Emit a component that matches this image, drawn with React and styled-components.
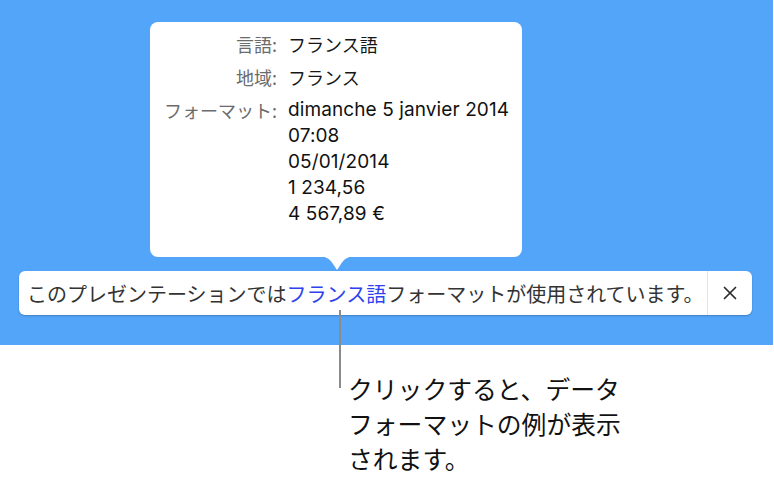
import React from 'react';
import styled, { createGlobalStyle } from 'styled-components';

const GlobalStyle = createGlobalStyle`
  body {
    margin: 0;
    background: #ffffff;
    font-family: "Inter", "Noto Sans CJK JP", sans-serif;
  }
`;

const Page = styled.div`
  position: relative;
  width: 774px;
  height: 478px;
  overflow: hidden;
`;

const Stage = styled.div`
  width: 773px;
  height: 345px;
  box-sizing: border-box;
  padding-top: 22px;
  background: #53a5f9;
  display: flex;
  flex-direction: column;
  align-items: flex-start;
`;

const Popover = styled.div`
  margin-left: 150px;
  width: 372px;
  height: 235px;
  box-sizing: border-box;
  padding: 9px 12px 0;
  background: #ffffff;
  border-radius: 8px;
  display: grid;
  grid-template-columns: 115px 1fr;
  column-gap: 11px;
  row-gap: 7px;
  align-content: start;
  font-size: 18px;
  line-height: 26px;
`;

const Label = styled.div`
  text-align: right;
  color: #6b6b6b;
  font-family: "Noto Sans CJK JP", sans-serif;
  white-space: nowrap;
`;

const Value = styled.div`
  color: #161616;
  font-family: "Noto Sans CJK JP", sans-serif;
  white-space: nowrap;
`;

const Line = styled.div`
  font-family: "Inter", "Noto Sans CJK JP", sans-serif;
  font-size: 19px;
  letter-spacing: 0.1px;
  color: #111111;
`;

const Arrow = styled.svg`
  display: block;
  margin-left: 317px;
  margin-top: -1px;
  width: 40px;
  height: 15px;
`;

const Bar = styled.div`
  margin-left: 19px;
  width: 733px;
  height: 44px;
  background: #ffffff;
  border-radius: 6px;
  box-shadow: 0 1px 2px rgba(0, 0, 0, 0.22);
  display: flex;
  align-items: stretch;
`;

const Message = styled.div`
  flex: 1;
  min-width: 0;
  padding-left: 8px;
  display: flex;
  align-items: center;
  font-family: "Noto Sans CJK JP", sans-serif;
  font-size: 20px;
  color: #333333;
  white-space: nowrap;
`;

const Link = styled.span`
  color: #3042ee;
`;

const Close = styled.button`
  width: 45px;
  flex: none;
  border: none;
  border-left: 1px solid #e3e3e3;
  background: transparent;
  padding: 0;
  display: flex;
  align-items: center;
  justify-content: center;
  cursor: pointer;
`;

const Leader = styled.div`
  position: absolute;
  left: 339px;
  top: 310px;
  width: 2px;
  height: 78px;
  background: #8c8c8c;
`;

const Callout = styled.p`
  margin: 0;
  padding: 26px 0 0 348px;
  font-family: "Noto Sans CJK JP", sans-serif;
  font-size: 24.8px;
  line-height: 35px;
  color: #111111;
`;

const formats = [
  'dimanche 5 janvier 2014',
  '07:08',
  '05/01/2014',
  '1 234,56',
  '4 567,89 €',
];

export default function App() {
  return (
    <Page>
      <GlobalStyle />
      <Stage>
        <Popover>
          <Label>言語:</Label>
          <Value>フランス語</Value>
          <Label>地域:</Label>
          <Value>フランス</Value>
          <Label>フォーマット:</Label>
          <Value>
            {formats.map((f) => (
              <Line key={f}>{f}</Line>
            ))}
          </Value>
        </Popover>
        <Arrow viewBox="0 0 40 15">
          <path d="M0 0 C9 0 13 3 16 8 L20 14 L24 8 C27 3 31 0 40 0 Z" fill="#ffffff" />
        </Arrow>
        <Bar>
          <Message>
            このプレゼンテーションでは<Link>フランス語</Link>フォーマットが使用されています。
          </Message>
          <Close aria-label="閉じる">
            <svg width="14" height="14" viewBox="0 0 14 14">
              <path d="M1.5 1.5 L12.5 12.5 M12.5 1.5 L1.5 12.5" stroke="#2a2a2a" strokeWidth="1.7" strokeLinecap="round" />
            </svg>
          </Close>
        </Bar>
      </Stage>
      <Leader />
      <Callout>
        クリックすると、データ<br />
        フォーマットの例が表示<br />
        されます。
      </Callout>
    </Page>
  );
}
